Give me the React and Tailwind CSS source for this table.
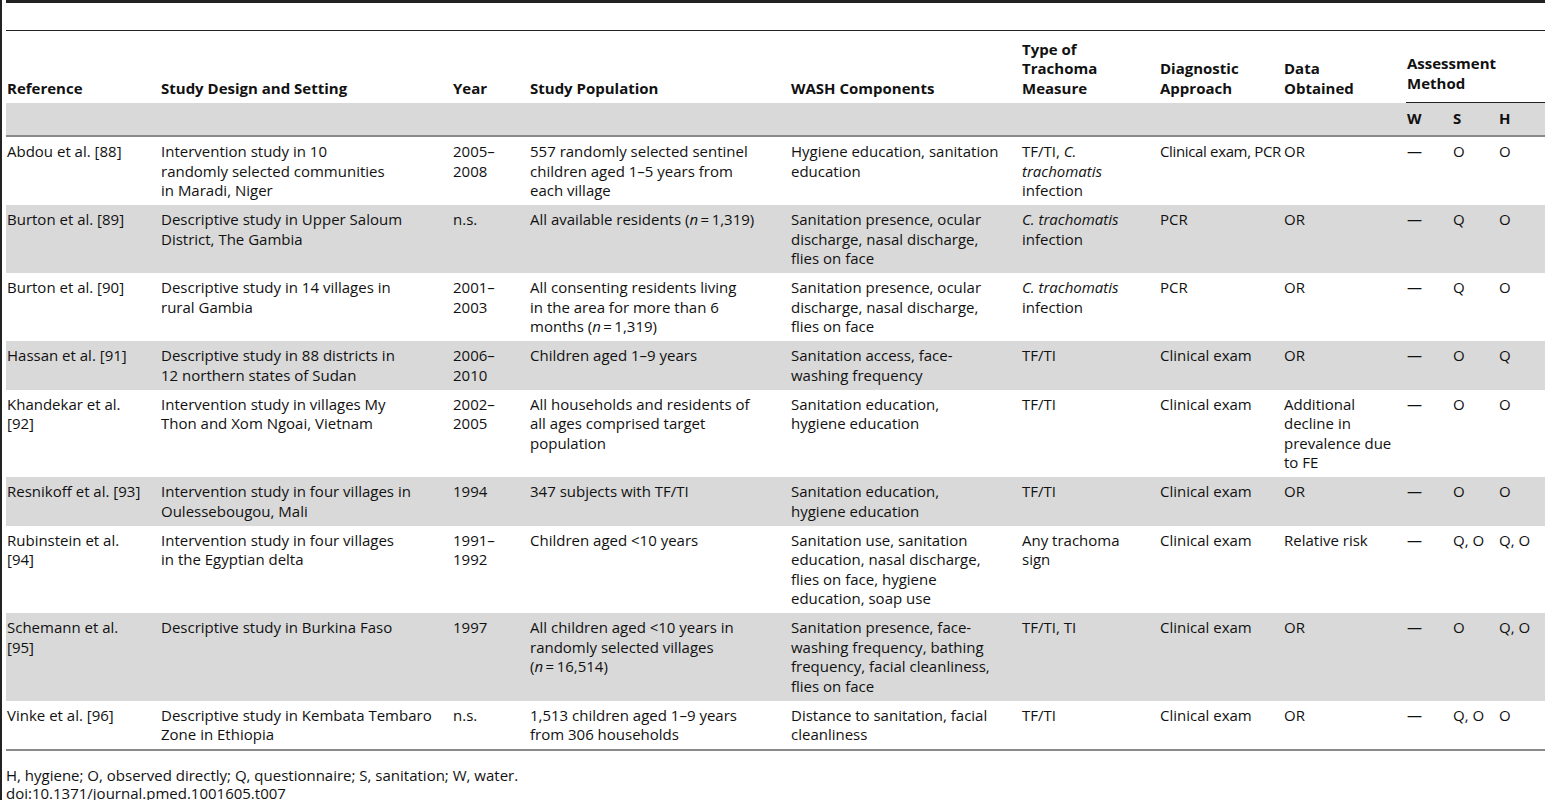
const C = <i>C.</i>
const trach = <i>trachomatis</i>
const n = (v) => (<>(<i>n</i>{'\u2009=\u2009'}{v})</>)

const rows = [
  {
    ref: ['Abdou et al. [88]'],
    design: ['Intervention study in 10', 'randomly selected communities', 'in Maradi, Niger'],
    year: ['2005–', '2008'],
    pop: ['557 randomly selected sentinel', 'children aged 1–5 years from', 'each village'],
    wash: ['Hygiene education, sanitation', 'education'],
    type: [<>TF/TI, {C}</>, trach, 'infection'],
    diag: [<span className="tracking-[-0.35px]">Clinical exam, PCR</span>],
    data: ['OR'],
    w: '—', s: 'O', h: 'O',
  },
  {
    ref: ['Burton et al. [89]'],
    design: ['Descriptive study in Upper Saloum', 'District, The Gambia'],
    year: ['n.s.'],
    pop: [<>All available residents {n('1,319')}</>],
    wash: ['Sanitation presence, ocular', 'discharge, nasal discharge,', 'flies on face'],
    type: [<><i>C. trachomatis</i></>, 'infection'],
    diag: ['PCR'],
    data: ['OR'],
    w: '—', s: 'Q', h: 'O',
  },
  {
    ref: ['Burton et al. [90]'],
    design: ['Descriptive study in 14 villages in', 'rural Gambia'],
    year: ['2001–', '2003'],
    pop: ['All consenting residents living', 'in the area for more than 6', <>months {n('1,319')}</>],
    wash: ['Sanitation presence, ocular', 'discharge, nasal discharge,', 'flies on face'],
    type: [<><i>C. trachomatis</i></>, 'infection'],
    diag: ['PCR'],
    data: ['OR'],
    w: '—', s: 'Q', h: 'O',
  },
  {
    ref: ['Hassan et al. [91]'],
    design: ['Descriptive study in 88 districts in', '12 northern states of Sudan'],
    year: ['2006–', '2010'],
    pop: ['Children aged 1–9 years'],
    wash: ['Sanitation access, face-', 'washing frequency'],
    type: ['TF/TI'],
    diag: ['Clinical exam'],
    data: ['OR'],
    w: '—', s: 'O', h: 'Q',
  },
  {
    ref: ['Khandekar et al.', '[92]'],
    design: ['Intervention study in villages My', 'Thon and Xom Ngoai, Vietnam'],
    year: ['2002–', '2005'],
    pop: ['All households and residents of', 'all ages comprised target', 'population'],
    wash: ['Sanitation education,', 'hygiene education'],
    type: ['TF/TI'],
    diag: ['Clinical exam'],
    data: ['Additional', 'decline in', 'prevalence due', 'to FE'],
    w: '—', s: 'O', h: 'O',
  },
  {
    ref: ['Resnikoff et al. [93]'],
    design: ['Intervention study in four villages in', 'Oulessebougou, Mali'],
    year: ['1994'],
    pop: ['347 subjects with TF/TI'],
    wash: ['Sanitation education,', 'hygiene education'],
    type: ['TF/TI'],
    diag: ['Clinical exam'],
    data: ['OR'],
    w: '—', s: 'O', h: 'O',
  },
  {
    ref: ['Rubinstein et al.', '[94]'],
    design: ['Intervention study in four villages', 'in the Egyptian delta'],
    year: ['1991–', '1992'],
    pop: ['Children aged <10 years'],
    wash: ['Sanitation use, sanitation', 'education, nasal discharge,', 'flies on face, hygiene', 'education, soap use'],
    type: ['Any trachoma', 'sign'],
    diag: ['Clinical exam'],
    data: ['Relative risk'],
    w: '—', s: 'Q, O', h: 'Q, O',
  },
  {
    ref: ['Schemann et al.', '[95]'],
    design: ['Descriptive study in Burkina Faso'],
    year: ['1997'],
    pop: ['All children aged <10 years in', 'randomly selected villages', n('16,514')],
    wash: ['Sanitation presence, face-', 'washing frequency, bathing', 'frequency, facial cleanliness,', 'flies on face'],
    type: ['TF/TI, TI'],
    diag: ['Clinical exam'],
    data: ['OR'],
    w: '—', s: 'O', h: 'Q, O',
  },
  {
    ref: ['Vinke et al. [96]'],
    design: ['Descriptive study in Kembata Tembaro', 'Zone in Ethiopia'],
    year: ['n.s.'],
    pop: ['1,513 children aged 1–9 years', 'from 306 households'],
    wash: ['Distance to sanitation, facial', 'cleanliness'],
    type: ['TF/TI'],
    diag: ['Clinical exam'],
    data: ['OR'],
    w: '—', s: 'Q, O', h: 'O',
  },
]

function Lines({ lines }) {
  return lines.map((l, i) => (
    <span key={i}>
      {i > 0 && <br />}
      {l}
    </span>
  ))
}

function Td({ children }) {
  return <td className="align-top pt-[5px] pb-[4.5px] pl-[1px] whitespace-nowrap overflow-visible">{children}</td>
}

export default function App() {
  return (
    <div className="min-h-screen bg-white flex font-['Open_Sans',sans-serif] text-[15px] leading-[19.5px] text-[#111]">
      <div className="w-[2px] shrink-0 bg-[#222]" />
      <div className="ml-[4px] flex-1 min-w-0">
        <div className="h-[3px] bg-[#222]" />
        <div className="h-[27px]" />
        <div className="h-px bg-[#222]" />

        <table className="table-fixed w-full border-separate border-spacing-0">
          <colgroup>
            <col className="w-[154px]" />
            <col className="w-[292px]" />
            <col className="w-[77px]" />
            <col className="w-[261px]" />
            <col className="w-[231px]" />
            <col className="w-[138px]" />
            <col className="w-[124px]" />
            <col className="w-[123px]" />
            <col className="w-[46px]" />
            <col className="w-[46px]" />
            <col className="w-[47px]" />
          </colgroup>
          <thead className="font-bold">
            <tr className="h-[72px]">
              <th className="align-bottom text-left pb-[5px] pl-[1px]">Reference</th>
              <th className="align-bottom text-left pb-[5px] pl-[1px]">Study Design and Setting</th>
              <th className="align-bottom text-left pb-[5px] pl-[1px]">Year</th>
              <th className="align-bottom text-left pb-[5px] pl-[1px]">Study Population</th>
              <th className="align-bottom text-left pb-[5px] pl-[1px]">WASH Components</th>
              <th className="align-bottom text-left pb-[5px] pl-[1px]">Type of<br />Trachoma<br />Measure</th>
              <th className="align-bottom text-left pb-[5px] pl-[1px]">Diagnostic<br />Approach</th>
              <th className="align-bottom text-left pb-[5px] pl-[1px]">Data<br />Obtained</th>
              <th colSpan={3} className="align-bottom text-left pb-[9px] pl-[1px] border-b border-[#222]">
                Assessment<br />Method
              </th>
            </tr>
            <tr className="h-[34px] bg-[#d9d9d9]">
              <th colSpan={8} className="border-b-2 border-[#8a8a8a]" />
              <th className="text-left pl-[1px] border-b-2 border-[#8a8a8a]">W</th>
              <th className="text-left pl-[1px] border-b-2 border-[#8a8a8a]">S</th>
              <th className="text-left pl-[1px] border-b-2 border-[#8a8a8a]">H</th>
            </tr>
          </thead>
          <tbody>
            {rows.map((r, i) => (
              <tr key={i} className={i % 2 === 1 ? 'bg-[#d9d9d9]' : 'bg-white'}>
                <Td><Lines lines={r.ref} /></Td>
                <Td><Lines lines={r.design} /></Td>
                <Td><Lines lines={r.year} /></Td>
                <Td><Lines lines={r.pop} /></Td>
                <Td><Lines lines={r.wash} /></Td>
                <Td><Lines lines={r.type} /></Td>
                <Td><Lines lines={r.diag} /></Td>
                <Td><Lines lines={r.data} /></Td>
                <Td>{r.w}</Td>
                <Td>{r.s}</Td>
                <Td>{r.h}</Td>
              </tr>
            ))}
          </tbody>
        </table>

        <div className="h-[2px] bg-[#8a8a8a]" />
        <div className="mt-[15px] leading-[18px]">
          <p>H, hygiene; O, observed directly; Q, questionnaire; S, sanitation; W, water.</p>
          <p>doi:10.1371/journal.pmed.1001605.t007</p>
        </div>
      </div>
    </div>
  )
}
